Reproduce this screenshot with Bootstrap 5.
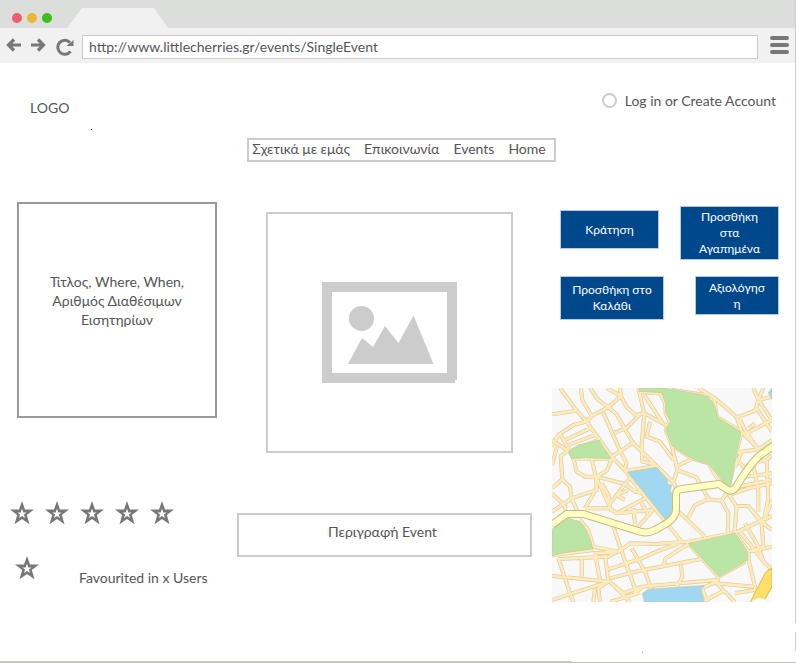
<!DOCTYPE html>
<html lang="el">
<head>
<meta charset="utf-8">
<meta name="viewport" content="width=device-width, initial-scale=1">
<title>Single Event</title>
<link href="https://cdn.jsdelivr.net/npm/bootstrap@5.3.0/dist/css/bootstrap.min.css" rel="stylesheet">
<style>
  body { font-family: Lato, "Noto Sans", sans-serif; font-size: 14px; line-height: 19px; color: #555; background: #fff; }
  .browser { min-height: 100vh; border-right: 1px solid #ccc; border-bottom: 1px solid #c3c4bb; }
  .titlebar { height: 28px; background: #dcdedb; padding-left: 12px; }
  .dot { width: 10px; height: 10px; border-radius: 50%; margin-right: 5px; }
  .dots { padding-bottom: 5px; }
  .dot-close { background: #ee5f6d; }
  .dot-min { background: #edb62f; }
  .dot-max { background: #3bbf1c; }
  .tab-shape { width: 101px; height: 20px; margin-left: 10px; background: #f1f1f1; clip-path: polygon(15% 0, 86% 0, 100% 100%, 0 100%); }
  .toolbar { height: 35px; background: #f1f1f1; padding: 2px 6px 0 5px; }
  .tool { border: 0; background: none; padding: 0; color: #777; line-height: 0; }
  .address { height: 24px; border: 1px solid #ccc; border-radius: 0; padding: 0 6px; font-size: 14px; color: #555; background: #fff; }
  .masthead { padding: 28px 19px 0 30px; }
  .brand { padding-top: 7px; color: #555; }
  .login-radio { appearance: none; width: 15px; height: 15px; border: 2px solid #ccc; border-radius: 50%; background: #fff; margin: 0; }
  .login-radio:checked { background: #ccc; }
  .site-nav { margin-top: 21px; margin-left: 8px; border: 2px solid #ccc; padding: 0 8px 2px 3px; gap: 14px; line-height: 18px; }
  .site-nav a { color: #555; }
  .event { display: grid; grid-template-columns: 207fr 295fr 227fr; column-gap: 20px; padding: 40px 16px 0 10px; }
  .info-box { height: 216px; margin-left: 7px; border: 2px solid #999; padding: 68px 20px 0; }
  .stars { margin-top: 83px; gap: 11px; }
  .favourite { margin-top: 31px; padding-left: 5px; gap: 40px; }
  .favourite span { padding-top: 12px; }
  .photo-box { height: 241px; margin: 10px 19px 0 29px; border: 2px solid #ccc; }
  .about-box { margin-top: 60px; height: 44px; border: 2px solid #ccc; padding-top: 7px; padding-right: 4px; }
  .actions { padding-left: 8px; padding-top: 4px; }
  .action { border: 1px solid #b3cce4; border-radius: 0; background: #00488c; color: #fff; font-size: 12px; line-height: 16px; padding: 2px 10px; }
  .action:hover { background: #003a70; color: #fff; }
  .action-std { width: 99px; min-height: 39px; }
  .action-cart { width: 104px; min-height: 44px; }
  .action-rate { width: 84px; min-height: 39px; word-break: break-all; }
  .actions-next { margin-top: 16px; }
  .map { margin-top: 68px; margin-right: 7px; }
  .speck { position: absolute; width: 1px; height: 1px; background: #000; }
  .speck-a { left: 91px; top: 129px; }
  .speck-b { left: 642px; top: 652px; background: #aaa; }
  .edge-gap { position: absolute; right: 0; width: 1px; background: #fff; }
  .edge-gap-a { top: 623px; height: 9px; }
  .edge-gap-b { top: 651px; height: 11px; }
  .edge-line { position: absolute; left: 0; bottom: 0; width: 72%; height: 1px; background: #ccc; }
</style>
</head>
<body>
<svg width="0" height="0" class="position-absolute" aria-hidden="true">
  <symbol id="star" viewBox="0 0 24 24"><path fill="#777" fill-rule="evenodd" d="M12 0l3 8.600h9l-7.200 5.500 2.700 9.100L12 18l-7.500 5.200 2.700-9.100L0 8.600h9zM12 7.400l-1.300 4H7.400l2.700 2-1.100 3.700 3-2.200 3 2.200-1.100-3.700 2.700-2h-3.300z"/></symbol>
</svg>
<div class="browser position-relative">
  <header>
    <div class="titlebar d-flex align-items-end">
      <div class="dots d-flex"><span class="dot dot-close"></span><span class="dot dot-min"></span><span class="dot dot-max"></span></div>
      <div class="tab-shape"></div>
    </div>
    <div class="toolbar d-flex align-items-center">
      <button class="tool pb-1" type="button" aria-label="Back"><svg width="17" height="14" viewBox="0 0 17 14" fill="none" stroke="currentColor" stroke-width="3.200"><path d="M3.500 7h12.500M9 1.500L3.500 7 9 12.500"/></svg></button>
      <button class="tool ms-2 pb-1" type="button" aria-label="Forward"><svg width="18" height="14" viewBox="0 0 18 14" fill="none" stroke="currentColor" stroke-width="3.200"><path d="M1 7h12.500M8 1.500L13.500 7 8 12.500"/></svg></button>
      <button class="tool ms-2" type="button" aria-label="Reload"><svg width="18" height="18" viewBox="0 0 18 18"><path fill="none" stroke="currentColor" stroke-width="3" d="M14.500 13.300A7 7 0 1 1 14 4.500"/><path fill="currentColor" d="M17.500 1.800v6.200h-6.700l2-2.200 3-2z"/></svg></button>
      <input class="address flex-grow-1 ms-2" type="text" aria-label="Address" value="http://www.littlecherries.gr/events/SingleEvent">
      <button class="tool ms-2 ps-1 pb-1" type="button" aria-label="Menu"><svg width="19" height="18" viewBox="0 0 19 18" stroke="currentColor" stroke-width="4" stroke-linecap="round"><path d="M2 2h15M2 9h15M2 16h15"/></svg></button>
    </div>
  </header>

  <div class="masthead d-flex justify-content-between align-items-start">
    <div class="brand">LOGO</div>
    <div class="d-flex align-items-center gap-2">
      <input class="login-radio" type="radio" id="login">
      <label for="login">Log in or Create Account</label>
    </div>
  </div>

  <div class="d-flex justify-content-center">
    <nav class="site-nav d-flex">
      <a class="text-decoration-none" href="#">Σχετικά με εμάς</a>
      <a class="text-decoration-none" href="#">Επικοινωνία</a>
      <a class="text-decoration-none" href="#">Events</a>
      <a class="text-decoration-none" href="#">Home</a>
    </nav>
  </div>

  <main class="event">
    <section>
      <div class="info-box text-center">Τίτλος, Where, When, Αριθμός Διαθέσιμων Εισητηρίων</div>
      <div class="stars d-flex">
        <button class="tool" type="button" aria-label="1"><svg width="24" height="24"><use href="#star"/></svg></button>
        <button class="tool" type="button" aria-label="2"><svg width="24" height="24"><use href="#star"/></svg></button>
        <button class="tool" type="button" aria-label="3"><svg width="24" height="24"><use href="#star"/></svg></button>
        <button class="tool" type="button" aria-label="4"><svg width="24" height="24"><use href="#star"/></svg></button>
        <button class="tool" type="button" aria-label="5"><svg width="24" height="24"><use href="#star"/></svg></button>
      </div>
      <div class="favourite d-flex align-items-start">
        <button class="tool" type="button" aria-label="Favourite"><svg width="24" height="24"><use href="#star"/></svg></button>
        <span>Favourited in x Users</span>
      </div>
    </section>

    <section>
      <div class="photo-box d-flex align-items-center justify-content-center">
        <svg width="135" height="101" viewBox="0 0 135 101" fill="#ccc" role="img" aria-label="Event photo"><path fill-rule="evenodd" d="M0 0h135v98h-2v3H0zM10 10v81h115V10z"/><circle cx="39.500" cy="36.500" r="12.500"/><path d="M26 82l14-26 11 9 12-21 13.500 17L91.500 33.500l20 48.500z"/></svg>
      </div>
      <div class="about-box text-center">Περιγραφή Event</div>
    </section>

    <section>
      <div class="actions">
        <div class="d-flex justify-content-between align-items-start">
          <button class="btn action action-std mt-1" type="button">Κράτηση</button>
          <button class="btn action action-std" type="button">Προσθήκη στα Αγαπημένα</button>
        </div>
        <div class="actions-next d-flex justify-content-between align-items-start">
          <button class="btn action action-cart px-1" type="button">Προσθήκη στο Καλάθι</button>
          <button class="btn action action-rate" type="button">Αξιολόγηση</button>
        </div>
      </div>
      <div class="map">
        <svg class="d-block w-100" viewBox="21 24 660 642" role="img" aria-label="Map">
          <defs>
            <path id="streets" d="M45 24L95 92L125 125L200 230L240 272L290 338L362 425L412 488M21 103L95 92M108 24L112 60L140 108L190 82M135 24L160 60L190 82L228 48L225 24M185 24L228 48L245 82L272 105L298 100M125 125L140 108M190 82L215 103L240 148L265 190L335 258L385 308M240 148L285 103M175 98L225 212M208 158L240 146M200 230L265 188M225 212L245 250L238 270M280 24L298 102L290 195L292 245L325 252M280 36L345 40L360 68L362 100L374 125L362 150L380 195L440 235L490 250L520 300L550 318M298 45L352 128M298 100L372 140M315 125L305 170L345 185L385 240M380 195L397 270L385 305L395 330M397 258L440 237M397 270L455 292L465 312L490 355M240 272L335 258
            M125 125L85 135L40 165L21 200M60 180L135 145M45 162L72 208M70 195L150 165M21 180L72 215L160 180M21 255L36 200M72 210L47 228L52 298L21 325M72 210L85 235L200 238M85 235L95 275L120 290L155 290L185 272L200 238M140 237L152 290L172 330L200 395M155 290L240 312L258 290M240 312L270 335L298 340M240 312L215 345L190 375M152 290L155 325L120 385M52 298L75 320L80 355L21 395M21 340L60 378L62 400M80 355L160 328M80 355L100 400M120 385L195 385L215 400L300 355M195 385L190 345L170 310M215 400L325 390M265 385L270 432M325 390L275 445M240 360L215 345L250 330M290 370L310 405
            M105 420L130 450L145 500L220 515L255 490L330 492L430 485L570 458L681 408M205 440L225 500L250 570L275 640M145 510L21 526M40 535L75 640L85 666M110 530V590M150 520L165 600M180 525L190 605M21 588L195 605L255 666M145 520L220 515M40 537L190 530L225 510M190 568L290 535L335 515L400 490M195 595L280 573L480 535M260 505L300 575L320 630M21 660L190 605M190 605L160 625L165 666M195 605L235 640L290 620L515 600M150 625L145 666M265 640L290 625M195 666L285 638M355 560L362 535L430 492M408 555L412 590L395 620M430 490L520 590L600 545M520 590L515 610L570 666M515 605L470 625L485 660L540 630M515 610L625 620M480 660L510 645M570 640L681 620
            M402 395L480 470M430 412L450 375L490 358L530 362L552 330M530 362L550 400L548 465M552 345L575 380L568 460M575 378L610 378L655 430L681 450M570 458L610 515L612 545L635 640M610 515L681 500M585 455L660 550L681 568M600 430L640 500L655 545M610 515L655 500L650 430L610 378M655 430L681 360
            M380 30L480 45L515 110L590 155L570 235L552 318M460 24L510 55L575 112L590 155L640 208M508 55L515 110M575 112L630 92L640 60L625 24M585 120L605 160L681 120M605 160L640 208L681 180M640 60L681 50M635 85L681 155M655 24L640 60L681 120M612 145L630 130M570 218L640 208M570 235L605 270M590 215L570 260M600 290L681 280M580 320L681 300M640 245L665 240L681 225M665 240L670 355L655 430M625 255L640 330L640 395M552 345L610 325L681 310"/>
            <path id="avenue" d="M21 434L65 402H115L290 456Q310 460 330 450L370 427Q393 408 393 390V345Q393 327 412 327L522 312L545 328Q560 337 572 323Q610 260 640 230L690 194"/>
          </defs>
          <rect x="21" y="24" width="660" height="642" fill="#f8f8f8"/>
          <use href="#streets" fill="none" stroke="#d9cba5" stroke-width="12" stroke-linejoin="round"/>
          <use href="#streets" fill="none" stroke="#ffebb9" stroke-width="8" stroke-linejoin="round"/>
          <g stroke="#cdc893" stroke-width="2">
            <g fill="#bae5a5">
              <path d="M282 24H358L480 46Q502 58 512 85L518 112L588 156L572 235L556 318L545 315L490 252L440 236L380 196L362 148L376 124L362 98V70L350 38L282 34z"/>
              <path d="M70 215L100 195L162 180L198 236L120 233L80 236z"/>
              <path d="M21 448L70 415L105 425Q130 450 144 506L60 518L21 527z"/>
              <path d="M430 491L570 459L608 515V540L522 590z"/>
            </g>
            <g fill="#a0d8f2">
              <path d="M247 277L335 262L368 300V312L380 315L376 332L383 345V400L362 420L292 330z"/>
              <path d="M298 666L292 640L310 628L478 616L468 630L478 666z"/>
              <path d="M681 24L670 38L681 58z"/>
            </g>
          </g>
          <use href="#avenue" fill="none" stroke="#c5bb83" stroke-width="24"/>
          <use href="#avenue" fill="none" stroke="#ffffc5" stroke-width="18"/>
          <path d="M616 666L660 580Q668 568 681 565V620L655 666z" fill="#ffdf66" stroke="#e1b853" stroke-width="3"/>
          <path d="M618 666Q640 645 664 660L660 666z" fill="#fff"/>
        </svg>
      </div>
    </section>
  </main>
  <span class="speck speck-a"></span><span class="speck speck-b"></span>
  <span class="edge-line"></span>
</div>
<span class="edge-gap edge-gap-a"></span><span class="edge-gap edge-gap-b"></span>
<script src="https://cdn.jsdelivr.net/npm/bootstrap@5.3.0/dist/js/bootstrap.bundle.min.js"></script>
</body>
</html>
